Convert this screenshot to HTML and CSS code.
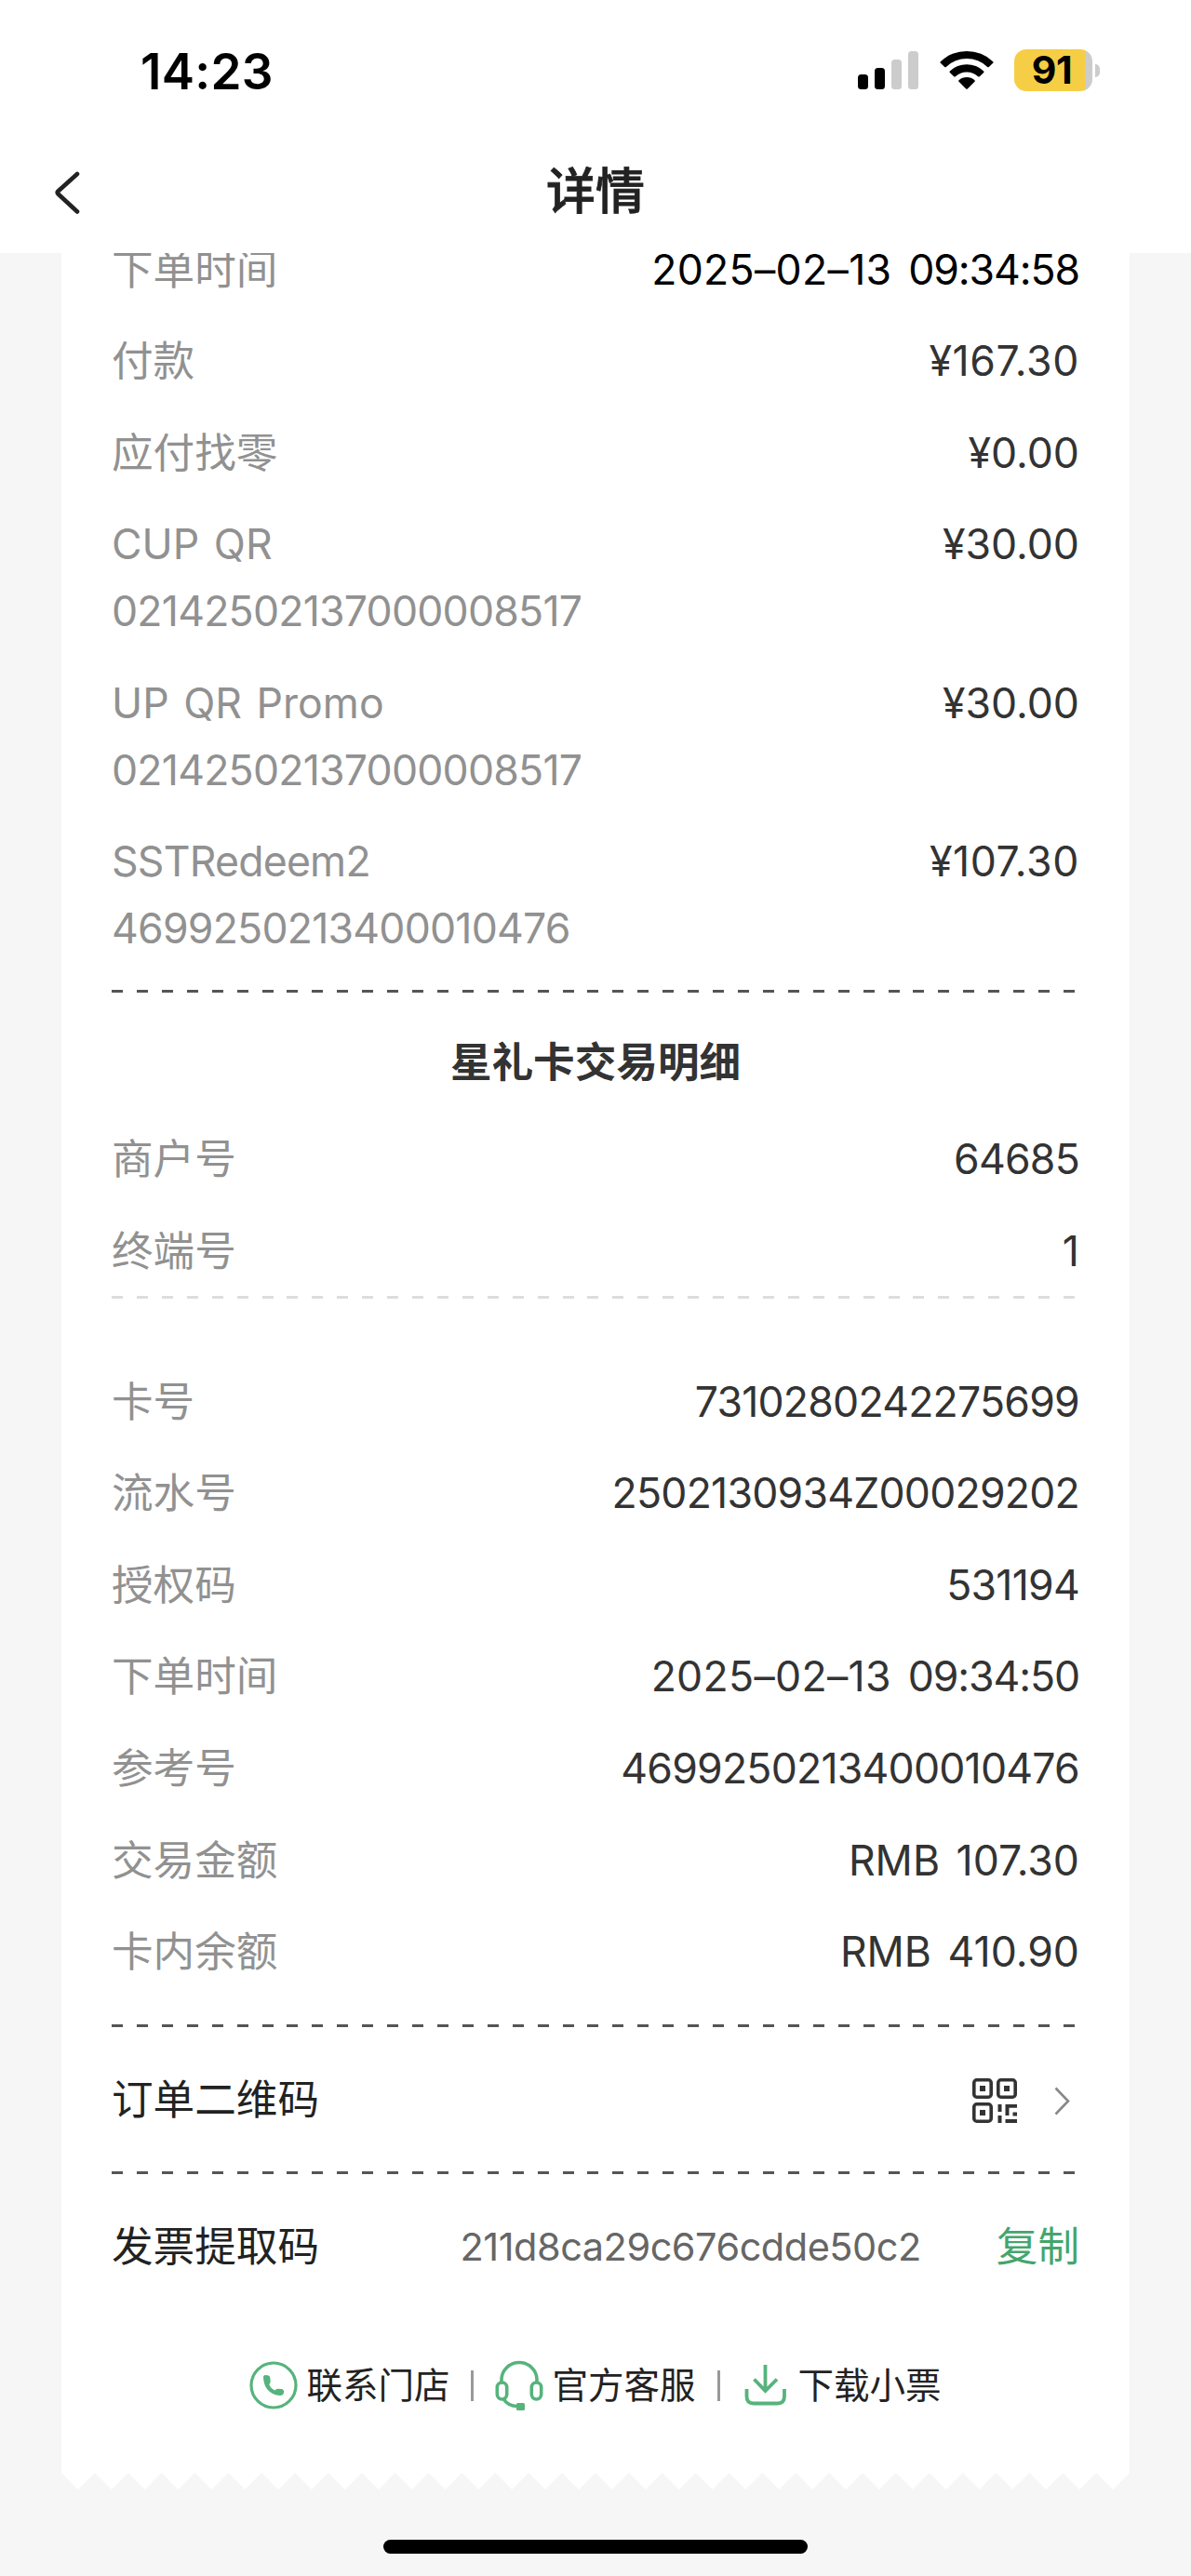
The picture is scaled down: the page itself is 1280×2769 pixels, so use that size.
FILE: index.html
```html
<!DOCTYPE html>
<html lang="zh-CN">

<head>
    <meta charset="UTF-8">
    <meta name="viewport" content="width=device-width, initial-scale=1.0">
    <title>详情</title>
    <link rel="stylesheet" href="styles.css">
</head>

<body>
    <header>
        <div class="status">
            <span class="time">14:23</span>
            <div class="status-right">
                <svg class="signal" width="65" height="41" viewBox="0 0 65 41">
                    <rect x="0" y="25" width="11" height="16" rx="3.5" />
                    <rect x="18" y="18" width="11" height="23" rx="3.5" />
                    <rect x="36" y="9" width="11" height="32" rx="3.5" fill="#ccc" />
                    <rect x="54" y="0" width="11" height="41" rx="3.5" fill="#ccc" />
                </svg>
                <svg class="wifi" width="58" height="42" viewBox="0 0 58 42">
                    <path d="M0.8 12.2Q0 13 0.8 13.8L5.2 18Q6 18.6 6.8 18A32 32 0 0 1 51.2 18Q52 18.6 52.8 18L57.2 13.8Q58 13 57.2 12.2A41 41 0 0 0 0.8 12.2Z" />
                    <path d="M10.8 22.4Q10 23.2 10.8 24L15.2 28.2Q16 28.8 16.8 28.2A18 18 0 0 1 41.2 28.2Q42 28.8 42.8 28.2L47.2 24Q48 23.2 47.2 22.4A26.500 26.500 0 0 0 10.800 22.400Z" />
                    <path d="M20.500 32.200Q19.800 33 20.500 33.800L28.200 41.400Q29 42.100 29.800 41.400L37.500 33.800Q38.200 33 37.500 32.200A13 13 0 0 0 20.500 32.200Z" />
                </svg>
                <div class="battery">91</div>
                <div class="battery-cap"></div>
            </div>
        </div>
        <div class="nav">
            <svg class="back" width="28" height="46" viewBox="0 0 28 46">
                <path d="M25 3L4.500 21.500Q3 23 4.500 24.500L25 43.500" fill="none" stroke="#222" stroke-width="4.600" stroke-linecap="round" />
            </svg>
            <h1>详情</h1>
        </div>
    </header>

    <main>
        <div class="ticket">
            <div class="list first">
                <div class="row"><span class="label">下单时间</span><span class="value date black">2025–02–13 <span class="clock">09:34:58</span></span></div>
                <div class="row"><span class="label">付款</span><span class="value wide">¥167.30</span></div>
                <div class="row"><span class="label">应付找零</span><span class="value">¥0.00</span></div>
                <div class="row"><span class="label">CUP QR<br><span class="no">02142502137000008517</span></span><span class="value">¥30.00</span></div>
                <div class="row"><span class="label">UP QR Promo<br><span class="no">02142502137000008517</span></span><span class="value">¥30.00</span></div>
                <div class="row"><span class="label"><span class="no">SSTRedeem2</span><br><span class="no">4699250213400010476</span></span><span class="value wide">¥107.30</span></div>
            </div>
            <div class="line"></div>

            <h2>星礼卡交易明细</h2>
            <div class="list">
                <div class="row"><span class="label">商户号</span><span class="value no">64685</span></div>
                <div class="row"><span class="label">终端号</span><span class="value">1</span></div>
            </div>
            <div class="line light"></div>

            <div class="list card">
                <div class="row"><span class="label">卡号</span><span class="value no">7310280242275699</span></div>
                <div class="row"><span class="label">流水号</span><span class="value no">2502130934Z00029202</span></div>
                <div class="row"><span class="label">授权码</span><span class="value no">531194</span></div>
                <div class="row"><span class="label">下单时间</span><span class="value date">2025–02–13 <span class="clock">09:34:50</span></span></div>
                <div class="row"><span class="label">参考号</span><span class="value no">4699250213400010476</span></div>
                <div class="row"><span class="label">交易金额</span><span class="value rmb">RMB 107.30</span></div>
                <div class="row"><span class="label">卡内余额</span><span class="value rmb">RMB 410.90</span></div>
            </div>
            <div class="line"></div>

            <div class="item">
                <span>订单二维码</span>
                <svg class="qr" width="48" height="48" viewBox="0 0 48 48">
                    <g fill="none" stroke="#333" stroke-width="3.600">
                        <rect x="1.800" y="1.800" width="18.400" height="18.400" rx="3" />
                        <rect x="27.800" y="1.800" width="18.400" height="18.400" rx="3" />
                        <rect x="1.800" y="27.800" width="18.400" height="18.400" rx="3" />
                    </g>
                    <g fill="#333">
                        <rect x="8" y="8" width="6" height="6" />
                        <rect x="34" y="8" width="6" height="6" />
                        <rect x="8" y="34" width="6" height="6" />
                        <rect x="27.500" y="28" width="4" height="8" />
                        <rect x="27.500" y="40" width="4" height="8" />
                        <path d="M35.500 28H48V31.800H39.500V40H35.500Z" />
                        <rect x="43.500" y="36.500" width="4.500" height="4" />
                        <rect x="35.500" y="44" width="12.500" height="4" />
                    </g>
                </svg>
                <svg class="arrow" width="17" height="31" viewBox="0 0 17 31">
                    <path d="M1.500 1.500L15 15.500L1.500 29.500" fill="none" stroke="#888" stroke-width="2.600" />
                </svg>
            </div>
            <div class="line next"></div>

            <div class="item">
                <span>发票提取码</span>
                <span class="code">211d8ca29c676cdde50c2</span>
                <span class="copy">复制</span>
            </div>

            <div class="links">
                <svg width="52" height="54" viewBox="0 0 52 54">
                    <circle cx="26" cy="27" r="24" fill="none" stroke="#56b37c" stroke-width="3.200" />
                    <path d="M15 17.500Q16 15.500 19 16.200Q22 16 22.300 19L22.700 23Q22.500 25 21.300 26Q23 30.500 27.500 32.500Q28.500 30.800 30.500 30.700L34.500 31Q37.500 31.300 37 35Q36.500 38 33 38Q24.500 37.800 19 31Q15 25.500 15 17.500Z" fill="#56b37c" />
                </svg>
                <span>联系门店</span>
                <i></i>
                <svg width="52" height="54" viewBox="0 0 52 54" fill="none" stroke="#56b37c" stroke-width="3.600">
                    <path d="M7 24V21A19 18.500 0 0 1 45 21V24" />
                    <rect x="2.300" y="24" width="10.400" height="18" rx="5.200" />
                    <rect x="39.300" y="24" width="10.400" height="18" rx="5.200" />
                    <path d="M9 41.500Q14 49.500 24 49.500" />
                    <rect x="23" y="46" width="9" height="8" rx="1.500" fill="#56b37c" stroke="none" />
                </svg>
                <span>官方客服</span>
                <i></i>
                <svg width="52" height="54" viewBox="0 0 52 54" fill="none" stroke="#56b37c" stroke-width="3.800">
                    <path d="M25.500 5V33M13.500 20.500L25.500 33L38 20.500" />
                    <path d="M5.500 31V39Q5.500 46.500 13 46.500H38.500Q46 46.500 46 39V31" />
                </svg>
                <span>下载小票</span>
            </div>
        </div>

        <!-- 小票锯齿边 -->
        <svg class="zigzag" width="1148" height="18">
            <defs>
                <pattern id="tooth" width="35.875" height="18" patternUnits="userSpaceOnUse">
                    <path d="M0 0H35.875L17.940 18Z" fill="#fff" />
                </pattern>
            </defs>
            <rect width="1148" height="18" fill="url(#tooth)" />
        </svg>
        <div class="home-bar"></div>
    </main>
</body>

</html>
```
FILE: styles.css
```css
* {
    margin: 0;
    padding: 0;
    box-sizing: border-box;
}
body {
    width: 1280px;
    height: 2769px;
    overflow: hidden;
    background-color: #f6f6f6;
    font-family: Inter, "Noto Sans CJK SC", sans-serif;
    font-size: 44.6px;
    color: #333;
}
svg {
    display: block;
    flex-shrink: 0;
}

/* 顶部 */
header {
    height: 272px;
    background-color: #fff;
}
.status {
    display: flex;
    justify-content: space-between;
    height: 140px;
    padding: 0 98px 0 151px;
}
.time {
    margin-top: 41px;
    line-height: 72px;
    font-size: 53px;
    font-weight: 600;
    letter-spacing: 0.3px;
    color: #000;
}
.status-right {
    display: flex;
    align-items: flex-start;
}
.signal {
    margin-top: 55px;
}
.wifi {
    margin: 54px 22px 0 23px;
}
.battery {
    width: 84px;
    height: 45px;
    margin-top: 53px;
    padding-right: 3px;
    border-radius: 13px;
    background: linear-gradient(to right, #f6ce46 77px, #ccc 77px);
    font-size: 41px;
    line-height: 45px;
    font-weight: 650;
    letter-spacing: -0.5px;
    text-align: center;
    color: #000;
}
.battery-cap {
    width: 5px;
    height: 14px;
    margin: 69px 0 0 3px;
    border-radius: 0 5px 5px 0;
    background-color: #ccc;
}
.nav {
    display: flex;
    align-items: center;
    height: 132px;
    padding: 0 58px;
}
.back {
    margin-top: 1px;
}
h1 {
    flex: 1;
    padding-right: 28px;
    line-height: 72px;
    text-align: center;
    font-size: 53px;
    font-weight: 500;
    color: #222;
    -webkit-text-stroke: 0.8px #222;
}

/* 小票 */
main {
    overflow: hidden;
}
.ticket {
    width: 1148px;
    height: 2403.5px;
    margin: 0 auto;
    padding: 0 54px;
    background-color: #fff;
}
.row {
    display: flex;
    justify-content: space-between;
    margin-top: 26.7px;
    line-height: 71.9px;
}
.row:first-child {
    margin-top: 0;
}
.first {
    margin-top: -17.5px;
}
.label {
    color: #919191;
    word-spacing: 3px;
}
.value {
    color: #333;
}
.no {
    letter-spacing: -0.78px;
}
.wide {
    letter-spacing: 0.6px;
}
.date {
    letter-spacing: 0.3px;
    word-spacing: 5px;
}
.clock {
    letter-spacing: -1.1px;
}
.rmb {
    word-spacing: 5px;
}
.black {
    color: #000;
}
.line {
    height: 3px;
    margin-top: 28.5px;
    background: repeating-linear-gradient(to right, #555 0, #555 12px, transparent 12px, transparent 26.92px);
}
.light {
    margin-top: 11.5px;
    background: repeating-linear-gradient(to right, #ddd 0, #ddd 12px, transparent 12px, transparent 26.92px);
}
.next {
    margin-top: 0;
}
h2 {
    height: 144.5px;
    line-height: 150px;
    text-align: center;
    font-size: 44.6px;
    font-weight: 700;
}
.card {
    margin-top: 75.5px;
    margin-bottom: 41px;
}
.item {
    display: flex;
    align-items: center;
    height: 155px;
    line-height: 72px;
    color: #222;
}
.qr {
    margin-top: 3px;
    margin-left: auto;
}
.arrow {
    margin: 3px 10px 0 40px;
}
.code {
    margin-left: auto;
    font-size: 41.5px;
    letter-spacing: -0.5px;
    color: #666;
}
.copy {
    margin-left: 81px;
    color: #45a56c;
}
.links {
    display: flex;
    align-items: center;
    justify-content: center;
    height: 144px;
    line-height: 60px;
    font-size: 38.5px;
    color: #222;
}
.links span {
    margin-left: 9px;
}
.links i {
    width: 3px;
    height: 33px;
    margin: 0 23px;
    background-color: #999;
}
.zigzag {
    margin: 0 auto;
}
.home-bar {
    width: 456px;
    height: 15px;
    margin: 54px auto 0;
    border-radius: 8px;
    background-color: #000;
}
```
